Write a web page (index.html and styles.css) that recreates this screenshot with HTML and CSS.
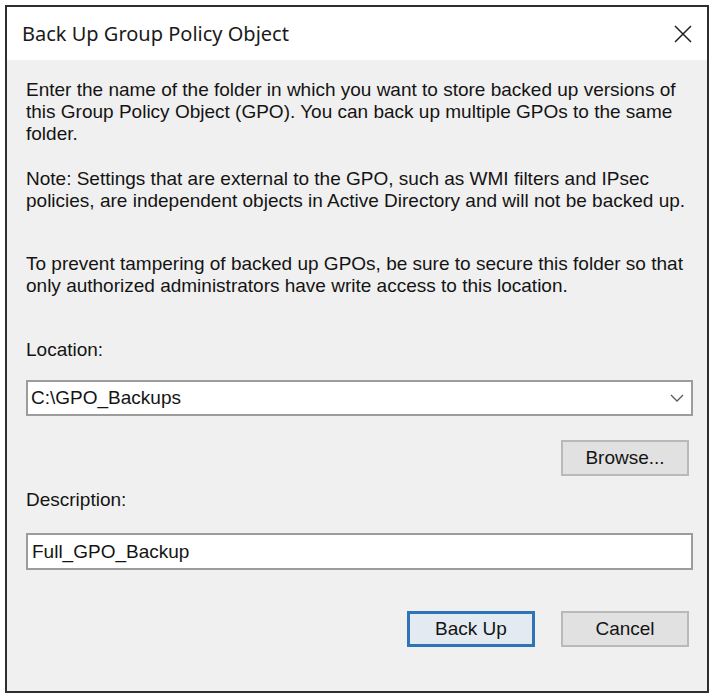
FILE: index.html
```html
<!DOCTYPE html>
<html lang="en">
<head>
  <meta charset="UTF-8" />
  <title>Back Up Group Policy Object</title>
  <link rel="stylesheet" href="styles.css">
</head>
<body>
  <div class="window">
    <div class="titlebar">
      <span class="title">Back Up Group Policy Object</span>
      <svg class="close" width="20" height="18" viewBox="0 0 20 18">
        <path d="M2 1 L18 17 M18 1 L2 17" stroke="#1e1e1e" stroke-width="1.5" fill="none" />
      </svg>
    </div>

    <div class="content">
      <p class="intro">Enter the name of the folder in which you want to store backed up versions of<br>this Group Policy Object (GPO). You can back up multiple GPOs to the same<br>folder.</p>
      <p class="note">Note: Settings that are external to the GPO, such as WMI filters and IPsec<br>policies, are independent objects in Active Directory and will not be backed up.</p>
      <p class="warn">To prevent tampering of backed up GPOs, be sure to secure this folder so that<br>only authorized administrators have write access to this location.</p>

      <label class="label loc-label">Location:</label>
      <div class="combo">
        <span class="value">C:\GPO_Backups</span>
        <svg class="chevron" width="14" height="8" viewBox="0 0 14 8">
          <path d="M1 1 L7 7 L13 1" stroke="#5a5a5a" stroke-width="1.3" fill="none" />
        </svg>
      </div>

      <div class="row browse-row">
        <button class="btn">Browse...</button>
      </div>

      <label class="label desc-label">Description:</label>
      <div class="textbox">
        <span class="value">Full_GPO_Backup</span>
      </div>

      <div class="row actions">
        <button class="btn default">Back Up</button>
        <button class="btn">Cancel</button>
      </div>
    </div>
  </div>
</body>
</html>
```

FILE: styles.css
```css
* {
  box-sizing: border-box;
  margin: 0;
  padding: 0;
}

body {
  background: #ffffff;
  font-family: 'Liberation Sans', Arial, sans-serif;
  color: #141414;
}

.window {
  margin: 5px 0 0 5px;
  width: 704px;
  height: 688px;
  border: 2px solid #2e2e2e;
  display: flex;
  flex-direction: column;
}

.titlebar {
  height: 53px;
  background: #ffffff;
  display: flex;
  align-items: center;
  justify-content: space-between;
  padding: 0 14px 0 15px;
}

.title {
  font-family: 'Noto Sans', 'Open Sans', sans-serif;
  font-size: 20px;
  color: #1a1a1a;
}

.content {
  flex: 1;
  background: #f0f0f0;
  padding: 19px 14px 0 19px;
  font-size: 19px;
  line-height: 22px;
  white-space: nowrap;
}

.note {
  margin-top: 23px;
}

.warn {
  margin-top: 41px;
}

.label {
  display: block;
}

.loc-label {
  margin-top: 42px;
}

.desc-label {
  margin-top: 13px;
}

.combo,
.textbox {
  height: 36px;
  background: #ffffff;
  border: 2px solid #9c9c9c;
  display: flex;
  align-items: center;
  justify-content: space-between;
  padding: 0 7px 0 3px;
}

.combo {
  margin-top: 19px;
}

.textbox {
  margin-top: 22px;
  height: 37px;
  padding-left: 4px;
}

.row {
  display: flex;
  justify-content: flex-end;
  gap: 26px;
  padding-right: 4px;
}

.browse-row {
  margin-top: 24px;
}

.actions {
  margin-top: 41px;
}

.btn {
  width: 128px;
  height: 36px;
  font-family: inherit;
  font-size: 19px;
  color: #141414;
  background: #e1e1e1;
  border: 2px solid #b9b9b9;
}

.btn.default {
  background: #e4eaf1;
  border: 3px solid #2d74b9;
}
```
